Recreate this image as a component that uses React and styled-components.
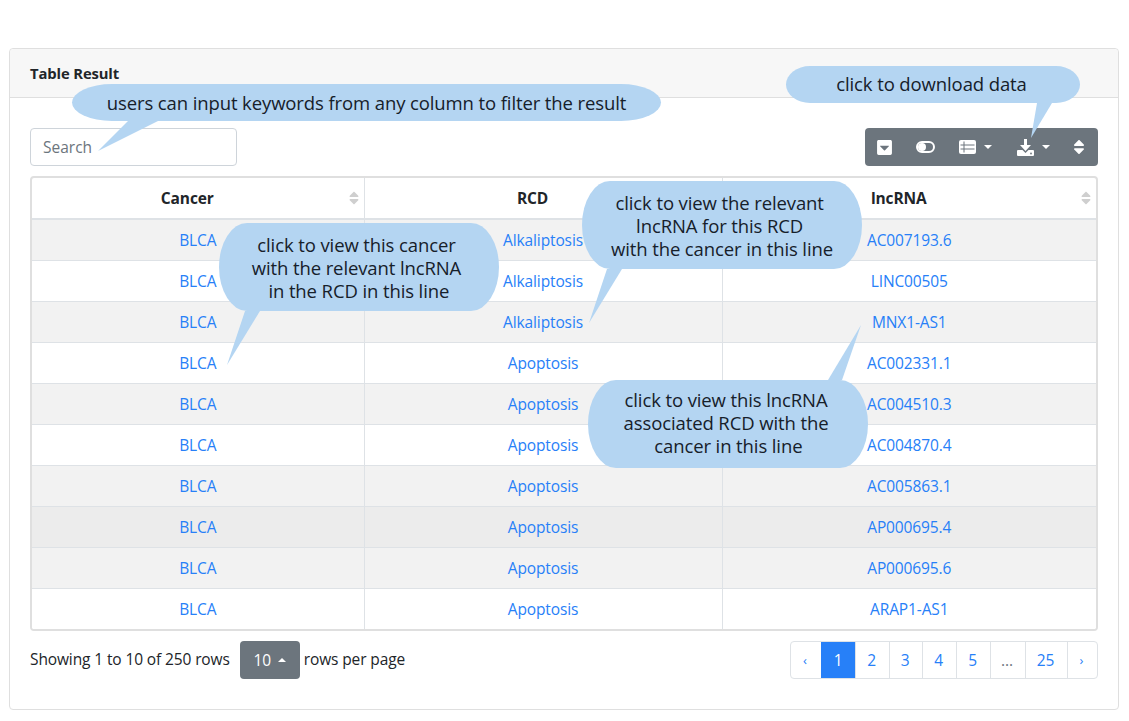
import React from 'react'
import styled, { createGlobalStyle } from 'styled-components'
import { FaCaretSquareDown, FaSort } from 'react-icons/fa'

const GlobalStyle = createGlobalStyle`
  html, body {
    margin: 0;
    padding: 0;
    background: #fff;
    color: #212529;
    font-family: "Open Sans", "Noto Sans", sans-serif;
    font-size: 15.5px;
    letter-spacing: -0.12px;
  }
`

const Page = styled.div`
  position: relative;
  width: 1129px;
  height: 721px;
  padding: 48px 10px 0 9px;
  box-sizing: border-box;
`

const Card = styled.section`
  border: 1px solid #dfdfdf;
  border-radius: 4px;
  height: 662px;
  box-sizing: border-box;
`

const CardHeader = styled.header`
  height: 49px;
  box-sizing: border-box;
  padding-left: 20px;
  display: flex;
  align-items: center;
  background: #f7f7f7;
  border-bottom: 1px solid #dfdfdf;
  border-radius: 4px 4px 0 0;
  font-size: 14.8px;
  font-weight: 700;
`

const CardBody = styled.div`
  padding: 30px 20px 0;
`

const Toolbar = styled.div`
  display: flex;
  justify-content: space-between;
  margin-bottom: 10px;
`

const SearchInput = styled.input`
  width: 207px;
  height: 38px;
  box-sizing: border-box;
  padding: 0 12px;
  border: 1px solid #ced4da;
  border-radius: 4px;
  font: inherit;
  outline: none;

  &::placeholder {
    color: #6c757d;
    opacity: 1;
  }
`

const ButtonGroup = styled.div`
  display: flex;
  height: 38px;
  background: #6c757d;
  border-radius: 4px;
  color: #fff;
`

const ToolButton = styled.div`
  display: flex;
  align-items: center;
  box-sizing: border-box;
  padding-left: ${p => p.$inset ?? 12}px;
  width: ${p => p.$width}px;
  font-size: ${p => p.$size || 16}px;
`

const Caret = styled.span`
  display: inline-block;
  margin-left: 8px;
  border-top: 4.8px solid #fff;
  border-left: 4.8px solid transparent;
  border-right: 4.8px solid transparent;
`

const TableWrap = styled.div`
  border: 2px solid #dfdfdf;
  border-radius: 4px;
  overflow: hidden;
`

const Table = styled.table`
  width: 100%;
  table-layout: fixed;
  border-collapse: collapse;
`

const HeadCell = styled.th`
  height: 40px;
  padding: 0;
  font-size: 15.5px;
  font-weight: 700;
  border-left: 1px solid #dee2e6;
  border-bottom: 2px solid #dee2e6;

  &:first-child {
    border-left: 0;
  }
`

const HeadInner = styled.div`
  display: flex;
  align-items: center;
`

const HeadLabel = styled.span`
  flex: 1;
  text-align: center;
`

const SortMark = styled(FaSort)`
  width: 10px;
  height: 16px;
  margin: 0 5px 0 6px;
  color: #cfcfcf;
`

const Row = styled.tr`
  background: ${p => (p.$hover ? '#ececec' : p.$striped ? '#f2f2f2' : '#fff')};
`

const Cell = styled.td`
  height: 40px;
  padding: 0;
  text-align: center;
  color: #2780f8;
  border-left: 1px solid #dee2e6;
  border-top: 1px solid #dee2e6;

  &:first-child {
    border-left: 0;
  }
`

const Footer = styled.div`
  display: flex;
  justify-content: space-between;
  margin-top: 10px;
`

const PageInfo = styled.div`
  display: flex;
  align-items: center;
  height: 36px;
`

const SizeButton = styled.div`
  display: flex;
  align-items: center;
  justify-content: center;
  flex: none;
  width: 60px;
  height: 38px;
  margin: 2px 4px 0 10px;
  background: #6c757d;
  border-radius: 4px;
  color: #fff;
`

const CaretUp = styled.span`
  margin-left: 7px;
  border-bottom: 4.8px solid #fff;
  border-left: 4.8px solid transparent;
  border-right: 4.8px solid transparent;
`

const Pagination = styled.nav`
  display: flex;
  height: 38px;
  border: 1px solid #dee2e6;
  border-radius: 4px;
  box-sizing: border-box;
`

const PageItem = styled.div`
  display: flex;
  align-items: center;
  justify-content: center;
  box-sizing: border-box;
  padding-right: ${p => (p.$active ? '0' : '2px')};
  width: ${p => p.$width}px;
  border-left: ${p => (p.$first || p.$active ? '0' : '1px solid #dee2e6')};
  background: ${p => (p.$active ? '#2780f8' : 'transparent')};
  color: ${p => (p.$active ? '#fff' : p.$muted ? '#6c757d' : '#2780f8')};
  font-size: ${p => p.$size || 15.5}px;
`

const Callout = styled.div`
  position: absolute;
  left: ${p => p.$x}px;
  top: ${p => p.$y}px;
  width: ${p => p.$w}px;
  height: ${p => p.$h}px;
  box-sizing: border-box;
  padding: ${p => p.$pad || '0'};
  display: flex;
  align-items: center;
  justify-content: center;
  text-align: center;
  white-space: pre;
  background: #b4d5f2;
  border-radius: ${p => p.$radius};
  color: #16202a;
  font-size: 18.5px;
  line-height: 23px;
  letter-spacing: -0.11px;
`

const Tail = styled.svg`
  position: absolute;
  left: 0;
  top: 0;
  overflow: visible;
  pointer-events: none;
`

const ToggleIcon = () => (
  <svg width="19" height="12" viewBox="0 0 19 12">
    <rect x="1" y="1" width="17" height="10" rx="5" fill="none" stroke="#fff" strokeWidth="2" />
    <circle cx="6" cy="6" r="4" fill="#fff" />
  </svg>
)

const ListIcon = () => (
  <svg width="17" height="14" viewBox="0 0 17 14">
    <rect width="17" height="14" rx="2" fill="#fff" />
    <path d="M5 1.5V12.5M1.5 5H15.5M1.5 9H15.5" stroke="#6c757d" strokeWidth="1" fill="none" />
  </svg>
)

const DownloadIcon = () => (
  <svg width="17" height="17" viewBox="0 0 17 17">
    <path d="M7 0H10V6H14L8.5 12L3 6H7Z" fill="#fff" />
    <path d="M1 11H5.5L8.5 14L11.5 11H16Q17 11 17 12V16Q17 17 16 17H1Q0 17 0 16V12Q0 11 1 11Z" fill="#fff" />
    <circle cx="14" cy="14.5" r="0.9" fill="#6c757d" />
  </svg>
)

const columnWidths = [332, 358, 374]

const rows = [
  ['BLCA', 'Alkaliptosis', 'AC007193.6'],
  ['BLCA', 'Alkaliptosis', 'LINC00505'],
  ['BLCA', 'Alkaliptosis', 'MNX1-AS1'],
  ['BLCA', 'Apoptosis', 'AC002331.1'],
  ['BLCA', 'Apoptosis', 'AC004510.3'],
  ['BLCA', 'Apoptosis', 'AC004870.4'],
  ['BLCA', 'Apoptosis', 'AC005863.1'],
  ['BLCA', 'Apoptosis', 'AP000695.4'],
  ['BLCA', 'Apoptosis', 'AP000695.6'],
  ['BLCA', 'Apoptosis', 'ARAP1-AS1'],
]

const pages = [
  { label: '‹', width: 30, first: true, size: 13 },
  { label: '1', width: 34, active: true },
  { label: '2', width: 34 },
  { label: '3', width: 33 },
  { label: '4', width: 34 },
  { label: '5', width: 34 },
  { label: '...', width: 35, muted: true },
  { label: '25', width: 42 },
  { label: '›', width: 30, size: 13 },
]

// tail points are relative to the callout's own top left corner
const callouts = [
  {
    x: 72, y: 84, w: 589, h: 37, radius: '40px / 18.5px',
    tail: '56,37 86,37 26,67',
    text: 'users can input keywords from any column to filter the result',
  },
  {
    x: 786, y: 66, w: 294, h: 37, radius: '24px / 18.5px', pad: '0 3px 2px 0',
    tail: '251,37 266,37 245,72',
    text: 'click to download data',
  },
  {
    x: 219, y: 223, w: 280, h: 88, radius: '28px / 44px', pad: '0 5px 0 0',
    tail: '26,88 41,88 8,142',
    text: 'click to view this cancer\nwith the relevant lncRNA\n in the RCD in this line',
  },
  {
    x: 582, y: 181, w: 280, h: 88, radius: '28px / 44px',
    tail: '25,88 40,88 7,142',
    text: 'click to view the relevant \nlncRNA for this RCD \nwith the cancer in this line',
  },
  {
    x: 588, y: 380, w: 280, h: 88, radius: '28px / 44px', pad: '0 4px 4px 0',
    tail: '240,0 254,0 273,-55',
    text: 'click to view this lncRNA\nassociated RCD with the\n cancer in this line',
  },
]

const App = () => (
  <Page>
    <GlobalStyle />
    <Card>
      <CardHeader>Table Result</CardHeader>
      <CardBody>
        <Toolbar>
          <SearchInput placeholder="Search" />
          <ButtonGroup>
            <ToolButton $width={39} $size={17} $inset={11}><FaCaretSquareDown /></ToolButton>
            <ToolButton $width={43}><ToggleIcon /></ToolButton>
            <ToolButton $width={58}><ListIcon /><Caret /></ToolButton>
            <ToolButton $width={57}><DownloadIcon /><Caret /></ToolButton>
            <ToolButton $width={36} $size={18} $inset={8}><FaSort /></ToolButton>
          </ButtonGroup>
        </Toolbar>
        <TableWrap>
          <Table>
            <colgroup>
              {columnWidths.map(w => <col key={w} width={w} />)}
            </colgroup>
            <thead>
              <tr>
                {['Cancer', 'RCD', 'lncRNA'].map(name => (
                  <HeadCell key={name}>
                    <HeadInner>
                      <HeadLabel>{name}</HeadLabel>
                      <SortMark />
                    </HeadInner>
                  </HeadCell>
                ))}
              </tr>
            </thead>
            <tbody>
              {rows.map((row, i) => (
                <Row key={row[2]} $striped={i % 2 === 0} $hover={i === 7}>
                  {row.map((value, j) => <Cell key={j}>{value}</Cell>)}
                </Row>
              ))}
            </tbody>
          </Table>
        </TableWrap>
        <Footer>
          <PageInfo>
            Showing 1 to 10 of 250 rows
            <SizeButton>10<CaretUp /></SizeButton>
            rows per page
          </PageInfo>
          <Pagination>
            {pages.map(p => (
              <PageItem
                key={p.label}
                $width={p.width}
                $first={p.first}
                $active={p.active}
                $muted={p.muted}
                $size={p.size}
              >
                {p.label}
              </PageItem>
            ))}
          </Pagination>
        </Footer>
      </CardBody>
    </Card>
    {callouts.map(c => (
      <Callout key={c.text} $x={c.x} $y={c.y} $w={c.w} $h={c.h} $radius={c.radius} $pad={c.pad}>
        <Tail width={c.w} height={c.h}>
          <polygon points={c.tail} fill="#b4d5f2" />
        </Tail>
        {c.text}
      </Callout>
    ))}
  </Page>
)

export default App
